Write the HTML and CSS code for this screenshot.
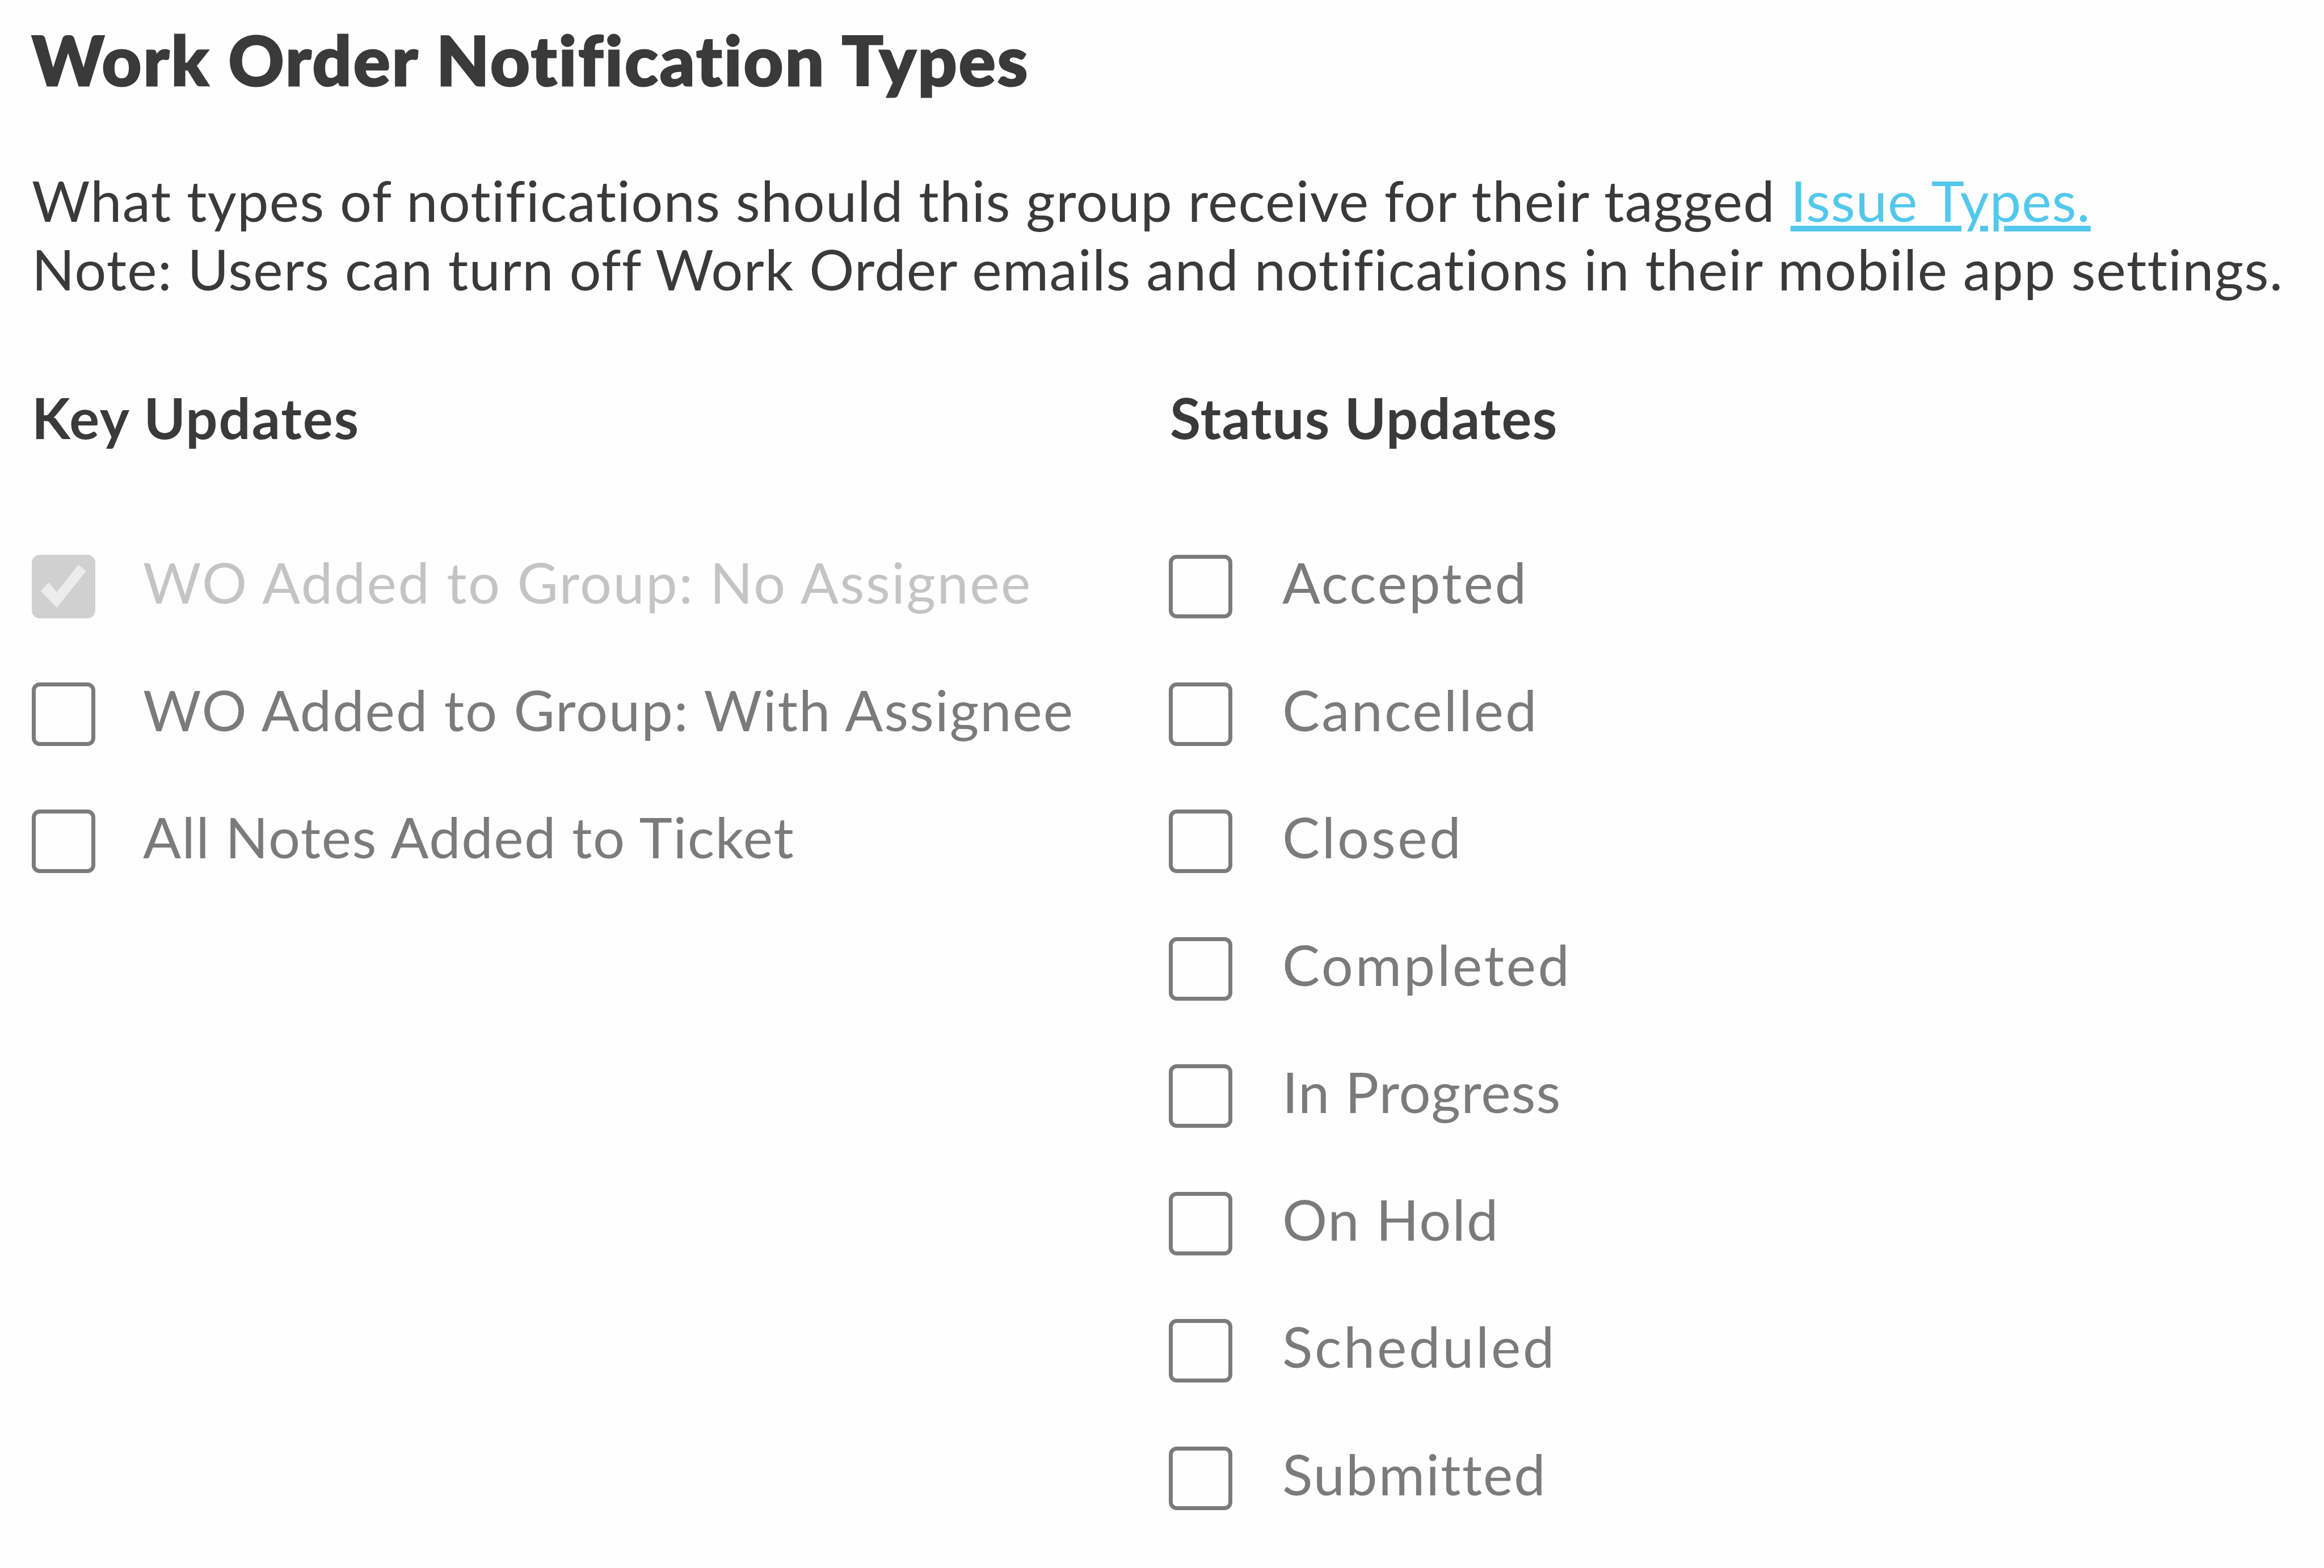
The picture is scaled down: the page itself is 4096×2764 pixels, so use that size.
FILE: index.html
```html
<!DOCTYPE html>
<html lang="en">

<head>
    <meta charset="UTF-8">
    <meta name="viewport" content="width=device-width, initial-scale=1.0">
    <title>Work Order Notification Types</title>
    <link rel="stylesheet" href="styles.css">
</head>

<body>
    <div class="container">
        <h2 class="title">Work Order Notification Types</h2>
        <p class="intro">
            What types of notifications should this group receive for their tagged <a href="#0">Issue Types.</a><br>
            Note: Users can turn off Work Order emails and notifications in their mobile app settings.
        </p>

        <div class="columns">
            <div class="column key">
                <h3>Key Updates</h3>
                <ul class="options">
                    <li class="disabled">
                        <span class="checkbox">
                            <svg viewBox="0 0 112 112"><path d="M15.5 63.7L30 48.5L44 65.8L82.2 17.5L96 28.5L44.2 92.9Z" /></svg>
                        </span>
                        <span class="label">WO Added to Group: No Assignee</span>
                    </li>
                    <li><span class="checkbox"></span><span class="label">WO Added to Group: With Assignee</span></li>
                    <li><span class="checkbox"></span><span class="label tight">All Notes Added to Ticket</span></li>
                </ul>
            </div>
            <div class="column status">
                <h3>Status Updates</h3>
                <ul class="options">
                    <li><span class="checkbox"></span><span class="label">Accepted</span></li>
                    <li><span class="checkbox"></span><span class="label">Cancelled</span></li>
                    <li><span class="checkbox"></span><span class="label wide">Closed</span></li>
                    <li><span class="checkbox"></span><span class="label wide">Completed</span></li>
                    <li><span class="checkbox"></span><span class="label tight">In Progress</span></li>
                    <li><span class="checkbox"></span><span class="label medium">On Hold</span></li>
                    <li><span class="checkbox"></span><span class="label wide">Scheduled</span></li>
                    <li><span class="checkbox"></span><span class="label medium">Submitted</span></li>
                </ul>
            </div>
        </div>
    </div>
</body>

</html>
```
FILE: styles.css
```css
* {
    box-sizing: border-box;
    margin: 0;
    padding: 0;
}

body {
    background-color: #fefefe;
    color: #3a3a3a;
    font-family: Lato, "Open Sans", sans-serif;
    font-size: 99px;
    line-height: 121px;
}

.container {
    padding: 33px 0 0 56px;
}

.title {
    margin-bottom: 115px;
    font-size: 121px;
    font-weight: 900;
    line-height: 144px;
    letter-spacing: 3.2px;
    -webkit-text-stroke: 3px #3a3a3a;
}

.intro {
    margin-bottom: 141px;
    letter-spacing: 1.27px;
    white-space: nowrap;
}

.intro a {
    color: #52c8ec;
    letter-spacing: 1.03px;
    text-decoration: underline;
    text-decoration-thickness: 10px;
    text-underline-offset: 7px;
}

.columns {
    display: flex;
}

.key {
    width: 2004px;
}

.column h3 {
    margin-bottom: 182px;
    font-size: 99px;
    font-weight: 700;
    letter-spacing: 2px;
}

.status h3 {
    padding-left: 2px;
    letter-spacing: 1.3px;
}

.options {
    display: flex;
    flex-direction: column;
    gap: 112.5px;
    list-style: none;
}

.options>li {
    display: flex;
    gap: 84px;
    height: 112px;
    color: #7b7b7b;
}

.status .options>li {
    gap: 88px;
}

.checkbox {
    width: 112px;
    height: 112px;
    border: 7px solid #7b7b7b;
    border-radius: 14px;
}

.label {
    line-height: 96px;
    letter-spacing: 2px;
    white-space: nowrap;
}

.label.tight {
    letter-spacing: 1.6px;
}

.status .label {
    letter-spacing: 3.1px;
}

.status .label.wide {
    letter-spacing: 3.7px;
}

.status .label.medium {
    letter-spacing: 2.1px;
}

.status .label.tight {
    letter-spacing: 1.1px;
}

.options>li.disabled {
    color: #c4c4c4;
}

.disabled .checkbox {
    border: none;
    background-color: #d0d0d0;
}

.disabled .checkbox svg {
    display: block;
    fill: #ececec;
}

.disabled .label {
    letter-spacing: 2.5px;
}
```
